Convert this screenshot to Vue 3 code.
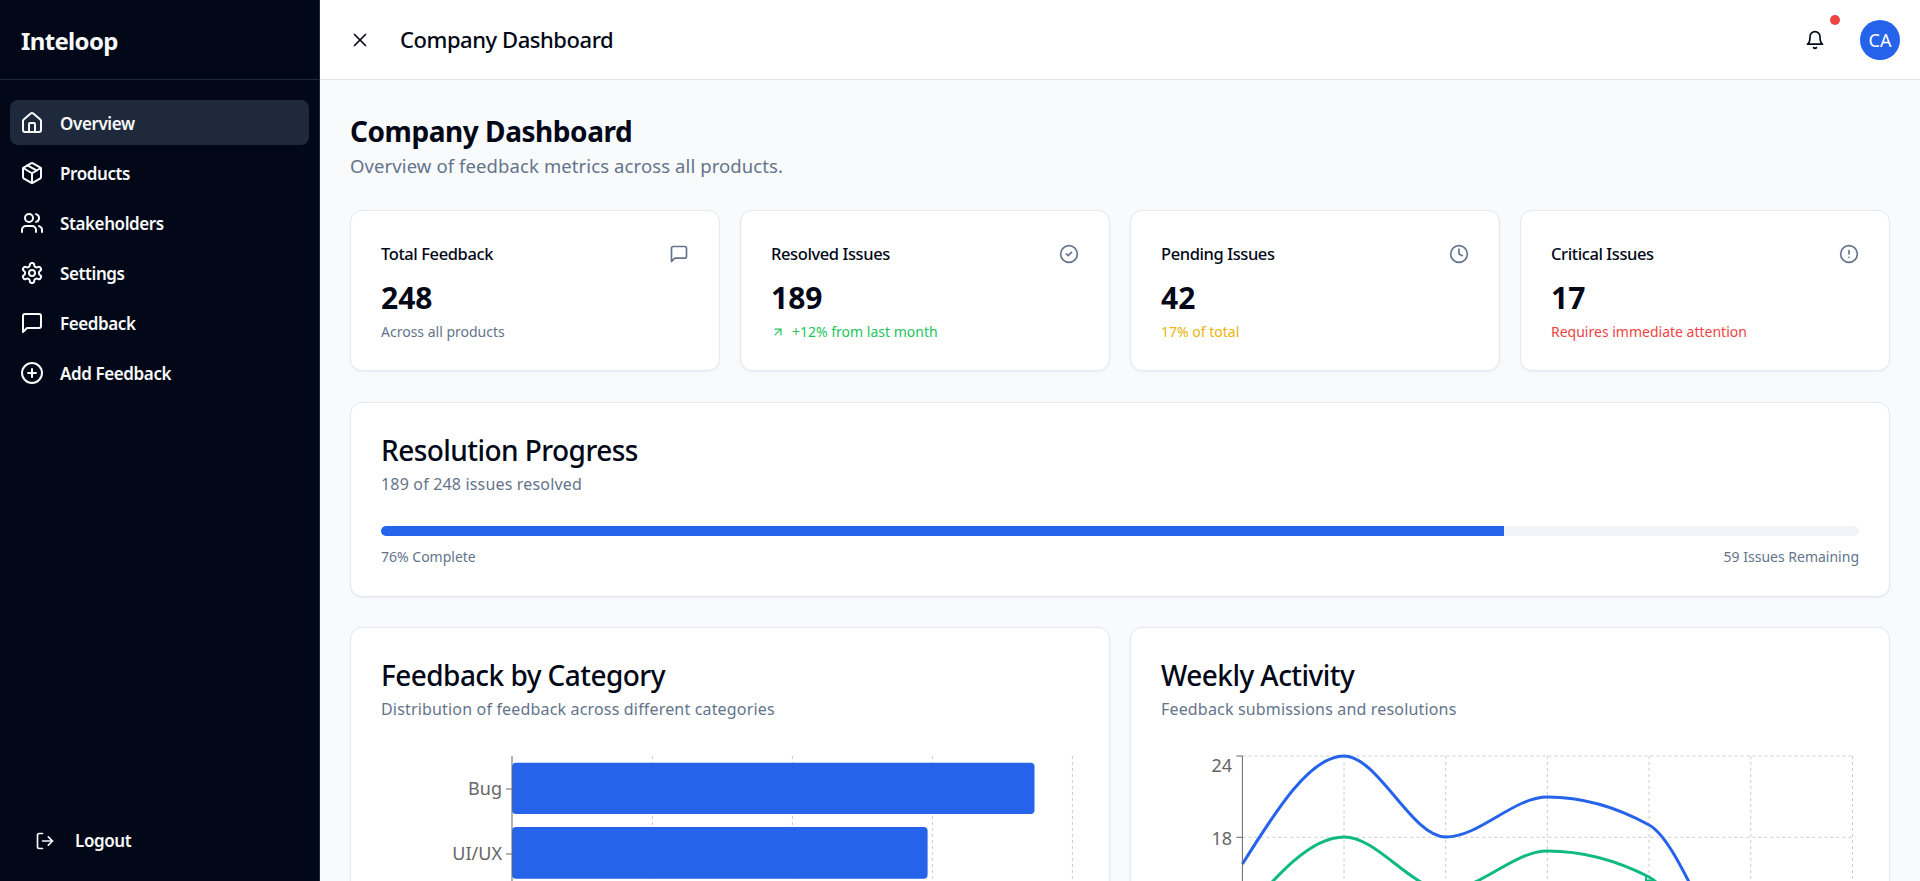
<script setup>
const navItems = [
  { label: "Overview", icon: "home", active: true },
  { label: "Products", icon: "package" },
  { label: "Stakeholders", icon: "users" },
  { label: "Settings", icon: "settings" },
  { label: "Feedback", icon: "message" },
  { label: "Add Feedback", icon: "plus" },
];

const stats = [
  { title: "Total Feedback", value: "248", note: "Across all products", tone: "muted", icon: "message" },
  { title: "Resolved Issues", value: "189", note: "+12% from last month", tone: "green", icon: "check", arrow: true },
  { title: "Pending Issues", value: "42", note: "17% of total", tone: "amber", icon: "clock" },
  { title: "Critical Issues", value: "17", note: "Requires immediate attention", tone: "red", icon: "alert" },
];

const iconPaths = {
  home: ["M15 21v-8a1 1 0 0 0-1-1h-4a1 1 0 0 0-1 1v8", "M3 10a2 2 0 0 1 .709-1.528l7-5.999a2 2 0 0 1 2.582 0l7 5.999A2 2 0 0 1 21 10v9a2 2 0 0 1-2 2H5a2 2 0 0 1-2-2z"],
  package: ["M11 21.73a2 2 0 0 0 2 0l7-4A2 2 0 0 0 21 16V8a2 2 0 0 0-1-1.73l-7-4a2 2 0 0 0-2 0l-7 4A2 2 0 0 0 3 8v8a2 2 0 0 0 1 1.73z", "M12 22V12", "m3.3 7 7.703 4.734a2 2 0 0 0 1.994 0L20.7 7", "m7.5 4.27 9 5.15"],
  users: ["M16 21v-2a4 4 0 0 0-4-4H6a4 4 0 0 0-4 4v2", "M13 7a4 4 0 1 1-8 0 4 4 0 0 1 8 0z", "M22 21v-2a4 4 0 0 0-3-3.87", "M16 3.13a4 4 0 0 1 0 7.75"],
  settings: ["M12.22 2h-.44a2 2 0 0 0-2 2v.18a2 2 0 0 1-1 1.73l-.43.25a2 2 0 0 1-2 0l-.15-.08a2 2 0 0 0-2.73.73l-.22.38a2 2 0 0 0 .73 2.73l.15.1a2 2 0 0 1 1 1.72v.51a2 2 0 0 1-1 1.74l-.15.09a2 2 0 0 0-.73 2.73l.22.38a2 2 0 0 0 2.73.73l.15-.08a2 2 0 0 1 2 0l.43.25a2 2 0 0 1 1 1.73V20a2 2 0 0 0 2 2h.44a2 2 0 0 0 2-2v-.18a2 2 0 0 1 1-1.73l.43-.25a2 2 0 0 1 2 0l.15.08a2 2 0 0 0 2.73-.73l.22-.39a2 2 0 0 0-.73-2.73l-.15-.08a2 2 0 0 1-1-1.74v-.5a2 2 0 0 1 1-1.74l.15-.09a2 2 0 0 0 .73-2.73l-.22-.38a2 2 0 0 0-2.73-.73l-.15.08a2 2 0 0 1-2 0l-.43-.25a2 2 0 0 1-1-1.73V4a2 2 0 0 0-2-2z", "M15 12a3 3 0 1 1-6 0 3 3 0 0 1 6 0z"],
  message: ["M21 15a2 2 0 0 1-2 2H7l-4 4V5a2 2 0 0 1 2-2h14a2 2 0 0 1 2 2z"],
  plus: ["M22 12a10 10 0 1 1-20 0 10 10 0 0 1 20 0z", "M8 12h8", "M12 8v8"],
  logout: ["M9 21H5a2 2 0 0 1-2-2V5a2 2 0 0 1 2-2h4", "m16 17 5-5-5-5", "M21 12H9"],
  close: ["M18 6 6 18", "m6 6 12 12"],
  bell: ["M6 8a6 6 0 0 1 12 0c0 7 3 9 3 9H3s3-2 3-9", "M10.3 21a1.94 1.94 0 0 0 3.4 0"],
  check: ["M22 12a10 10 0 1 1-20 0 10 10 0 0 1 20 0z", "m9 12 2 2 4-4"],
  clock: ["M22 12a10 10 0 1 1-20 0 10 10 0 0 1 20 0z", "M12 6v6l4 2"],
  alert: ["M22 12a10 10 0 1 1-20 0 10 10 0 0 1 20 0z", "M12 8v4", "M12 16h.01"],
  arrow: ["M7 7h10v10", "M7 17 17 7"],
};

// monotone cubic path, same curve type the chart library draws
function monotone(points) {
  const n = points.length;
  const h = points[1][0] - points[0][0];
  const slopes = [];
  for (let i = 0; i < n - 1; i++) {
    slopes.push((points[i + 1][1] - points[i][1]) / h);
  }
  const tangents = [0];
  for (let i = 1; i < n - 1; i++) {
    const a = slopes[i - 1];
    const b = slopes[i];
    const p = (a + b) / 2;
    tangents.push((Math.sign(a) + Math.sign(b)) * Math.min(Math.abs(a), Math.abs(b), 0.5 * Math.abs(p)));
  }
  tangents[0] = (3 * slopes[0] - tangents[1]) / 2;
  tangents.push((3 * slopes[n - 2] - tangents[n - 2]) / 2);
  let d = `M${points[0][0]},${points[0][1]}`;
  for (let i = 0; i < n - 1; i++) {
    const c = h / 3;
    d += `C${points[i][0] + c},${points[i][1] + c * tangents[i]} ${points[i + 1][0] - c},${points[i + 1][1] - c * tangents[i + 1]} ${points[i + 1][0]},${points[i + 1][1]}`;
  }
  return d;
}

const lineX = [81.4, 183, 284.7, 386.4, 488.1, 589.8, 691.5];
const lineGrid = lineX.slice(1);
const toPoints = (ys) => ys.map((y, i) => [lineX[i], y]);
const bluePath = monotone(toPoints([118, 10, 91, 51, 79, 222, 210]));
const greenPath = monotone(toPoints([169, 91, 144, 105, 131, 280, 270]));
</script>

<template>
  <div class="app">
    <aside class="sidebar">
      <div class="brand">Inteloop</div>
      <nav class="nav">
        <a v-for="item in navItems" :key="item.label" class="nav-item" :class="{ active: item.active }">
          <svg class="icon nav-icon" viewBox="0 0 24 24">
            <path v-for="d in iconPaths[item.icon]" :key="d" :d="d" />
          </svg>
          <span class="nav-label">{{ item.label }}</span>
        </a>
      </nav>
      <a class="logout">
        <svg class="icon logout-icon" viewBox="0 0 24 24">
          <path v-for="d in iconPaths.logout" :key="d" :d="d" />
        </svg>
        <span>Logout</span>
      </a>
    </aside>

    <div class="content">
      <header class="topbar">
        <svg class="icon close-icon" viewBox="0 0 24 24">
          <path v-for="d in iconPaths.close" :key="d" :d="d" />
        </svg>
        <span class="topbar-title">Company Dashboard</span>
        <div class="topbar-right">
          <div class="bell">
            <svg class="icon bell-icon" viewBox="0 0 24 24">
              <path v-for="d in iconPaths.bell" :key="d" :d="d" />
            </svg>
            <span class="dot"></span>
          </div>
          <div class="avatar">CA</div>
        </div>
      </header>

      <main class="main">
        <h1 class="page-title">Company Dashboard</h1>
        <p class="page-sub">Overview of feedback metrics across all products.</p>

        <section class="stats">
          <div v-for="s in stats" :key="s.title" class="card stat">
            <div class="stat-head">
              <span class="stat-title">{{ s.title }}</span>
              <svg class="icon stat-icon" viewBox="0 0 24 24">
                <path v-for="d in iconPaths[s.icon]" :key="d" :d="d" />
              </svg>
            </div>
            <div class="stat-value">{{ s.value }}</div>
            <div class="stat-note" :class="s.tone">
              <svg v-if="s.arrow" class="icon arrow-icon" viewBox="0 0 24 24">
                <path v-for="d in iconPaths.arrow" :key="d" :d="d" />
              </svg>
              {{ s.note }}
            </div>
          </div>
        </section>

        <section class="card progress-card">
          <h2 class="card-title">Resolution Progress</h2>
          <p class="card-sub">189 of 248 issues resolved</p>
          <div class="track"><div class="fill" :style="{ width: '76%' }"></div></div>
          <div class="progress-foot">
            <span>76% Complete</span>
            <span>59 Issues Remaining</span>
          </div>
        </section>

        <section class="charts">
          <div class="card chart-card">
            <h2 class="card-title">Feedback by Category</h2>
            <p class="card-sub">Distribution of feedback across different categories</p>
            <svg class="chart" width="698" height="300">
              <g class="grid">
                <line v-for="x in [271.4, 411.4, 551.4, 691.4]" :key="x" :x1="x" :x2="x" y1="10" y2="300" />
              </g>
              <rect x="131" y="16.7" width="522.5" height="51.3" rx="4" fill="#2563eb" />
              <rect x="131" y="81" width="415.6" height="51.7" rx="4" fill="#2563eb" />
              <line class="axis" x1="131" x2="131" y1="10" y2="300" />
              <line class="axis" x1="125" x2="131" y1="43" y2="43" />
              <line class="axis" x1="125" x2="131" y1="108" y2="108" />
              <text class="tick" x="121" y="49" text-anchor="end">Bug</text>
              <text class="tick" x="121" y="114" text-anchor="end">UI/UX</text>
            </svg>
          </div>

          <div class="card chart-card">
            <h2 class="card-title">Weekly Activity</h2>
            <p class="card-sub">Feedback submissions and resolutions</p>
            <svg class="chart" width="698" height="300">
              <g class="grid">
                <line v-for="x in lineGrid" :key="x" :x1="x" :x2="x" y1="10" y2="300" />
                <line x1="81.4" x2="691.5" y1="10" y2="10" />
                <line x1="81.4" x2="691.5" y1="91.3" y2="91.3" />
              </g>
              <path class="curve" :d="bluePath" stroke="#2563eb" />
              <path class="curve" :d="greenPath" stroke="#10b981" />
              <path class="curve thin" d="M485 131V134.5H493" stroke="#10b981" />
              <line class="axis" x1="81.4" x2="81.4" y1="10" y2="300" />
              <line class="axis" x1="75.4" x2="81.4" y1="10" y2="10" />
              <line class="axis" x1="75.4" x2="81.4" y1="91.3" y2="91.3" />
              <text class="tick" x="71" y="26" text-anchor="end">24</text>
              <text class="tick" x="71" y="99" text-anchor="end">18</text>
            </svg>
          </div>
        </section>
      </main>
    </div>
  </div>
</template>

<style>
body {
  overflow: hidden;
}
</style>

<style scoped>
.app {
  display: flex;
  height: 100vh;
  overflow: hidden;
  font-family: "Noto Sans", "Open Sans", sans-serif;
  color: #020817;
}

.icon {
  fill: none;
  stroke: currentColor;
  stroke-width: 2;
  stroke-linecap: round;
  stroke-linejoin: round;
  flex-shrink: 0;
}

.sidebar {
  width: 320px;
  flex-shrink: 0;
  display: flex;
  flex-direction: column;
  background: #020817;
  border-right: 1px solid #1e293b;
  box-sizing: border-box;
  color: #f8fafc;
}

.brand {
  height: 80px;
  box-sizing: border-box;
  padding-left: 21px;
  line-height: 82px;
  font-size: 24px;
  font-weight: 700;
  letter-spacing: -0.65px;
  border-bottom: 1px solid #1e293b;
}

.nav {
  display: flex;
  flex-direction: column;
  gap: 5px;
  padding: 20px 10px;
}

.nav-item {
  display: flex;
  align-items: center;
  gap: 16px;
  height: 45px;
  padding: 0 10px;
  border-radius: 8px;
  font-size: 17px;
  font-weight: 600;
  letter-spacing: -0.4px;
}

.nav-label {
  padding-top: 2px;
}

.nav-item.active {
  background: #1e293b;
}

.nav-icon {
  width: 24px;
  height: 24px;
}

.logout {
  margin-top: auto;
  display: flex;
  align-items: center;
  gap: 20px;
  padding: 0 0 29px 35px;
  font-size: 17px;
  font-weight: 600;
  letter-spacing: -0.4px;
}

.logout-icon {
  width: 20px;
  height: 20px;
}

.content {
  flex: 1;
  min-width: 0;
  display: flex;
  flex-direction: column;
  background: #f8fafc;
}

.topbar {
  height: 80px;
  flex-shrink: 0;
  box-sizing: border-box;
  display: flex;
  align-items: center;
  padding: 0 20px 0 29px;
  background: #fff;
  border-bottom: 1px solid #e2e8f0;
}

.close-icon {
  width: 22px;
  height: 22px;
  stroke-width: 1.8;
}

.topbar-title {
  margin-left: 29px;
  margin-bottom: 2px;
  font-size: 22px;
  font-weight: 500;
  letter-spacing: -0.45px;
}

.topbar-right {
  margin-left: auto;
  display: flex;
  align-items: center;
  gap: 35px;
}

.bell {
  position: relative;
  display: flex;
}

.bell-icon {
  width: 20px;
  height: 20px;
}

.dot {
  position: absolute;
  top: -15px;
  right: -15px;
  width: 10px;
  height: 10px;
  border-radius: 50%;
  background: #ef4444;
}

.avatar {
  width: 40px;
  height: 40px;
  border-radius: 50%;
  background: #2563eb;
  color: #fff;
  display: flex;
  align-items: center;
  justify-content: center;
  font-size: 18px;
}

.main {
  flex: 1;
  min-height: 0;
  overflow: hidden;
  padding: 30px;
}

.page-title {
  margin: 0;
  font-size: 28px;
  line-height: 42px;
  font-weight: 700;
  letter-spacing: -0.45px;
}

.page-sub {
  margin: 0;
  font-size: 18.5px;
  line-height: 27px;
  color: #64748b;
  letter-spacing: 0.1px;
}

.stats {
  display: grid;
  grid-template-columns: repeat(4, 1fr);
  gap: 20px;
  margin-top: 31px;
}

.card {
  box-sizing: border-box;
  background: #fff;
  border: 1px solid #e2e8f0;
  border-radius: 12px;
  box-shadow: 0 1px 2px rgba(0, 0, 0, 0.05);
}

.stat {
  height: 161px;
  padding: 30px;
}

.stat-head {
  display: flex;
  justify-content: space-between;
  align-items: flex-start;
}

.stat-title {
  font-size: 16.5px;
  line-height: 26px;
  font-weight: 500;
  letter-spacing: -0.4px;
}

.stat-icon {
  width: 20px;
  height: 20px;
  margin-top: 3px;
  color: #64748b;
}

.stat-value {
  margin-top: 10px;
  font-size: 30px;
  line-height: 42px;
  font-weight: 700;
}

.stat-note {
  display: flex;
  align-items: center;
  gap: 7px;
  margin-top: 2px;
  font-size: 14px;
  line-height: 22px;
  letter-spacing: 0;
}

.arrow-icon {
  width: 14px;
  height: 14px;
}

.muted { color: #64748b; }
.green { color: #22c55e; }
.amber { color: #eab308; }
.red { color: #ef4444; }

.progress-card {
  margin-top: 31px;
  height: 195px;
  padding: 30px;
}

.card-title {
  margin: 0;
  font-size: 28px;
  line-height: 34px;
  font-weight: 500;
  letter-spacing: -0.55px;
}

.card-sub {
  margin: 4px 0 0;
  font-size: 16px;
  line-height: 26px;
  color: #64748b;
  letter-spacing: 0.17px;
}

.track {
  margin-top: 29px;
  height: 10px;
  border-radius: 5px;
  overflow: hidden;
  background: #f1f5f9;
}

.fill {
  height: 100%;
  background: #2563eb;
}

.progress-foot {
  display: flex;
  justify-content: space-between;
  margin-top: 10px;
  font-size: 14px;
  line-height: 22px;
  color: #64748b;
  letter-spacing: 0;
}

.charts {
  display: grid;
  grid-template-columns: repeat(2, 1fr);
  gap: 20px;
  margin-top: 30px;
}

.chart-card {
  padding: 30px;
  height: 460px;
}

.chart {
  display: block;
  margin-top: 24px;
}

.grid line {
  stroke: #ccc;
  stroke-dasharray: 3 3;
}

.axis {
  stroke: #666;
}

.tick {
  font-size: 18px;
  fill: #666;
}

.curve {
  fill: none;
  stroke-width: 3;
}

.curve.thin {
  stroke-width: 2;
}
</style>
